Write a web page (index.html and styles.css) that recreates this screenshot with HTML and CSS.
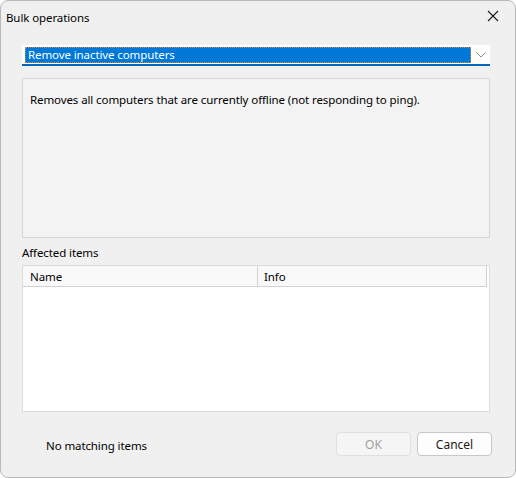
FILE: index.html
```html
<!DOCTYPE html>
<html lang="en">
<head>
    <meta charset="UTF-8">
    <title>Bulk operations</title>
    <link rel="stylesheet" href="styles.css">
</head>
<body>
    <div class="window">
        <div class="titlebar">
            <span class="title">Bulk operations</span>
            <span class="close">
                <svg width="12" height="12" viewBox="0 0 12 12"><path d="M1 1 L11 11 M11 1 L1 11" stroke="#1a1a1a" stroke-width="1.1" fill="none"/></svg>
            </span>
        </div>
        <div class="content">
            <div class="combo">
                <span class="combo-value">Remove inactive computers</span>
                <span class="combo-arrow">
                    <svg width="10" height="6" viewBox="0 0 10 6"><path d="M0.5 0.5 L5 5 L9.5 0.5" stroke="#8a8a8a" stroke-width="1" fill="none"/></svg>
                </span>
            </div>
            <div class="description">Removes all computers that are currently offline (not responding to ping).</div>
            <div class="section-label">Affected items</div>
            <div class="list">
                <div class="list-header">
                    <div class="col col-name">Name</div>
                    <div class="col col-info">Info</div>
                </div>
            </div>
            <div class="footer">
                <span class="status">No matching items</span>
                <div class="buttons">
                    <button class="btn" disabled>OK</button>
                    <button class="btn">Cancel</button>
                </div>
            </div>
        </div>
    </div>
</body>
</html>
```

FILE: styles.css
```css
body {
    margin: 0;
    background: #ffffff;
    font-family: "Noto Sans", "Open Sans", sans-serif;
    font-size: 11.5px;
    letter-spacing: -0.1px;
    color: #000;
}
.window {
    box-sizing: border-box;
    width: 516px;
    height: 478px;
    background: #f0f0f0;
    border: 1px solid #b9b9b9;
    border-radius: 8px;
    display: flex;
    flex-direction: column;
}
.titlebar {
    height: 31px;
    display: flex;
    align-items: center;
    justify-content: space-between;
    padding: 0 16px 0 5px;
}
.title {
    line-height: 16px;
    margin-top: 2px;
}
.close {
    display: flex;
    margin-top: -1px;
}
.content {
    padding: 13px 25px 0 21px;
    display: flex;
    flex-direction: column;
}
.combo {
    box-sizing: border-box;
    height: 21px;
    background: #ffffff;
    border-bottom: 2px solid #0067c0;
    display: flex;
    padding: 2px 0 0 3px;
}
.combo-value {
    flex: 1;
    box-sizing: border-box;
    height: 16px;
    background: #0078d7;
    color: #ffffff;
    line-height: 14px;
    padding-left: 2px;
    border: 1px dotted #d08a30;
}
.combo-arrow {
    width: 19px;
    display: flex;
    justify-content: center;
    padding-top: 5px;
}
.description {
    box-sizing: border-box;
    height: 160px;
    margin-top: 12px;
    border: 1px solid #d6d6d6;
    background: #f3f3f3;
    padding: 13px 7px;
    line-height: 16px;
}
.section-label {
    margin-top: 7px;
    line-height: 16px;
}
.list {
    box-sizing: border-box;
    height: 147px;
    margin-top: 4px;
    background: #ffffff;
    border: 1px solid #dcdcdc;
    padding-right: 2px;
}
.list-header {
    display: flex;
    height: 20px;
    background: #f9f9f9;
    border-bottom: 1px solid #d2d2d2;
}
.col {
    line-height: 18px;
    padding: 2px 0 0 7px;
}
.col-name {
    width: 227px;
    border-right: 1px solid #d2d2d2;
}
.col-info {
    flex: 1;
    padding-left: 6px;
    border-right: 1px solid #d2d2d2;
}
.footer {
    display: flex;
    align-items: center;
    justify-content: space-between;
    margin-top: 20px;
    margin-right: -2px;
}
.status {
    margin-left: 24px;
    margin-top: 2px;
}
.buttons {
    display: flex;
    gap: 6px;
}
.btn {
    box-sizing: border-box;
    width: 75px;
    height: 24px;
    font-family: inherit;
    font-size: 12px;
    letter-spacing: 0;
    background: #fdfdfd;
    border: 1px solid #c8c8c8;
    border-radius: 4px;
    color: #1a1a1a;
    padding: 0;
}
.btn:disabled {
    background: #f5f5f5;
    border-color: #e0e0e0;
    color: #a0a0a0;
}
```
